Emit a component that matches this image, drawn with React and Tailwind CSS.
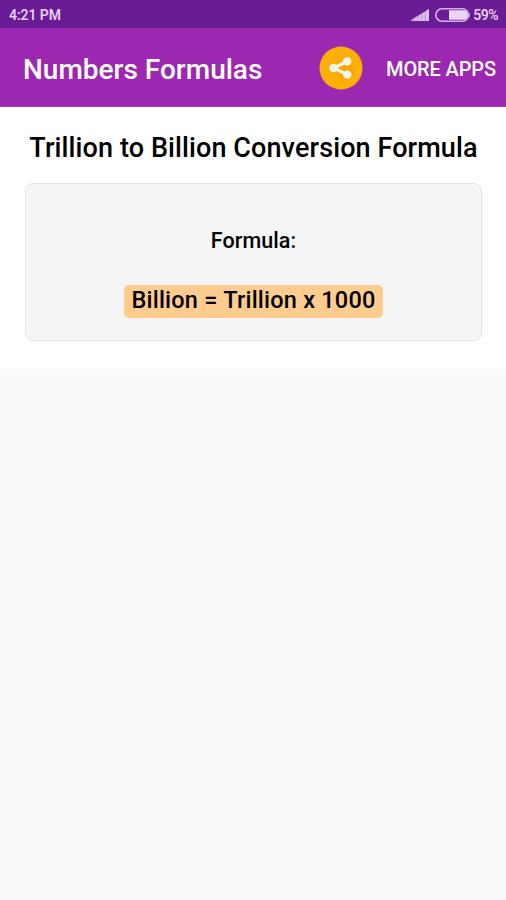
import React from 'react';

const SignalIcon = () => (
    <svg width="18" height="12" viewBox="0 0 18 12" fill="#c9a3dc">
        <path d="M0 12V11L18 0V12Z" />
        <path d="M4 12V8.8L6 7.6V12ZM7.8 12V6.6L9.8 5.4V12ZM11.4 12V4.4L13.4 3.2V12ZM15 12V2L18 0V12Z" fill="#dcc2ea" />
    </svg>
);

const BatteryIcon = () => (
    <svg width="35" height="14" viewBox="0 0 35 14" fill="none">
        <rect x="0.8" y="0.8" width="32.6" height="12.4" rx="6.2" stroke="#d3b2e4" strokeWidth="1.6" />
        <path d="M14 2.2H28A4.8 4.8 0 0 1 28 11.8H14Z" fill="#ecd5f2" />
        <path d="M34.3 5V9" stroke="#d3b2e4" strokeWidth="1" />
    </svg>
);

const ShareIcon = () => (
    <svg width="44" height="44" viewBox="0 0 44 44">
        <circle cx="22" cy="22" r="21.5" fill="#fdb004" />
        <path d="M31 18L36.5 24A21.5 21.5 0 0 1 24 36L13.5 25Z" fill="#f0a306" opacity="0.6" />
        <path d="M28 15.5L14.5 22L28 28.6" fill="none" stroke="#f7f3ee" strokeWidth="3.2" />
        <circle cx="14.4" cy="22" r="4.2" fill="#f7f3ee" />
        <circle cx="28.2" cy="15.4" r="4.2" fill="#f7f3ee" />
        <circle cx="28.2" cy="28.6" r="4.2" fill="#f7f3ee" />
    </svg>
);

const StatusBar = () => (
    <div className="flex h-7 items-center justify-between bg-[#6a1b96] pt-0.5 pr-2 pl-[9px] text-[#e6cff0]">
        <span className="text-[14px] leading-none font-semibold tracking-[-0.1px]">4:21 PM</span>
        <div className="flex items-center">
            <SignalIcon />
            <span className="ml-1.5">
                <BatteryIcon />
            </span>
            <span className="ml-[3px] text-[14px] leading-none font-semibold tracking-[-0.5px]">59%</span>
        </div>
    </div>
);

const AppBar = () => (
    <header className="flex h-[79px] items-center border-b border-[#a63ab8] bg-[#9c27b0] pr-2.5 pl-[23px] text-white">
        <h1 className="pt-[5px] text-[28px] leading-none font-medium whitespace-nowrap">Numbers Formulas</h1>
        <button className="mt-px ml-auto">
            <ShareIcon />
        </button>
        <button className="ml-[23px] pt-[3px] text-[20px] leading-none font-medium tracking-[-0.12px] whitespace-nowrap">
            MORE APPS
        </button>
    </header>
);

const App = () => {
    return (
        <div className="min-h-screen bg-[#fafafa] font-['Roboto',sans-serif]">
            <StatusBar />
            <AppBar />
            <main className="h-[262px] bg-white pt-[25px] pr-6 pl-[25px] text-center text-black">
                <h2 className="text-[27px] leading-8 font-medium tracking-[0.1px] whitespace-nowrap">
                    Trillion to Billion Conversion Formula
                </h2>
                <section className="mt-[19px] h-[158px] rounded-lg border border-[#e4e4e4] bg-[#f5f5f5] pt-[45px]">
                    <p className="text-[21.5px] leading-6 font-medium tracking-[0.1px]">Formula:</p>
                    <p className="mx-auto mt-8 h-[33px] w-[259px] rounded-[5px] bg-[#ffcc90] text-[23.5px] leading-[31px] font-medium tracking-[0.22px] whitespace-nowrap">
                        Billion = Trillion x 1000
                    </p>
                </section>
            </main>
        </div>
    );
};

export default App;
